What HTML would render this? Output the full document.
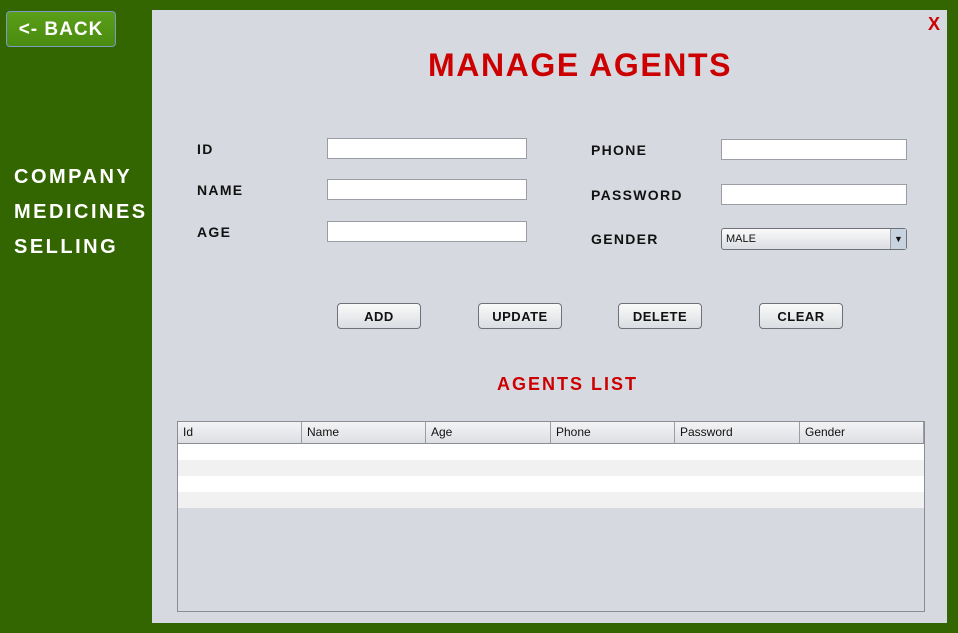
<!DOCTYPE html>
<html><head><style>
body{margin:0;width:958px;height:633px;background:#336600;position:relative;overflow:hidden;font-family:"Liberation Sans",Arial,sans-serif}
.a{position:absolute}
.back{left:6px;top:11px;width:108px;height:34px;border:1px solid #7a9cc4;border-radius:4px;background:linear-gradient(#5a9e18,#4a8c10);color:#fff;font-weight:bold;font-size:19px;text-align:center;line-height:36px;letter-spacing:1px}
.side{left:14px;color:#fff;font-weight:bold;font-size:20px;letter-spacing:2.5px}
.panel{left:152px;top:10px;width:795px;height:613px;background:#d6d9e0}
.lbl{font-weight:bold;font-size:14px;color:#111;letter-spacing:1.3px}
.in{background:#fff;border:1px solid #9a9da3;height:19px}
.btn{width:82px;height:24px;border:1px solid #6e7278;border-radius:4px;background:linear-gradient(#fafafa,#dadde2);font-weight:bold;font-size:13px;text-align:center;line-height:26px;color:#111;letter-spacing:.5px}
.th{top:422px;height:21px;font-size:12px;line-height:21px;padding-left:5px;box-sizing:border-box;border-right:1px solid #9a9da3;color:#111;background:linear-gradient(#f4f4f6,#dcdee3)}
</style></head><body>
<div class="a back">&lt;- BACK</div>
<div class="a side" style="top:166px">COMPANY</div>
<div class="a side" style="top:201px">MEDICINES</div>
<div class="a side" style="top:236px">SELLING</div>
<div class="a panel"></div>
<div class="a" style="left:928px;top:14px;color:#cc0000;font-weight:bold;font-size:18px">X</div>
<div class="a" style="left:428px;top:47px;color:#cc0000;font-weight:bold;font-size:32px;letter-spacing:1.6px">MANAGE AGENTS</div>
<div class="a lbl" style="left:197px;top:141px">ID</div>
<div class="a lbl" style="left:197px;top:182px">NAME</div>
<div class="a lbl" style="left:197px;top:224px">AGE</div>
<div class="a in" style="left:327px;top:138px;width:198px"></div>
<div class="a in" style="left:327px;top:179px;width:198px"></div>
<div class="a in" style="left:327px;top:221px;width:198px"></div>
<div class="a lbl" style="left:591px;top:142px">PHONE</div>
<div class="a lbl" style="left:591px;top:187px">PASSWORD</div>
<div class="a lbl" style="left:591px;top:231px">GENDER</div>
<div class="a in" style="left:721px;top:139px;width:184px"></div>
<div class="a in" style="left:721px;top:184px;width:184px"></div>
<div class="a" style="left:721px;top:228px;width:180px;height:20px;border:1px solid #6e7278;border-radius:3px;background:linear-gradient(#fafafa,#dadde2);font-size:11px;line-height:21px;padding-left:4px;color:#111">MALE<div class="a" style="right:0;top:0;width:15px;height:20px;border-left:1px solid #9a9da3;background:#c8d3e0;font-size:9px;line-height:20px;text-align:center">▼</div></div>
<div class="a btn" style="left:337px;top:303px">ADD</div>
<div class="a btn" style="left:478px;top:303px">UPDATE</div>
<div class="a btn" style="left:618px;top:303px">DELETE</div>
<div class="a btn" style="left:759px;top:303px">CLEAR</div>
<div class="a" style="left:497px;top:374px;color:#cc0000;font-weight:bold;font-size:18px;letter-spacing:2px">AGENTS LIST</div>
<div class="a" style="left:177px;top:421px;width:746px;height:189px;border:1px solid #8a8d93;background:#d6d9e0"></div>
<div class="a" style="left:178px;top:443px;width:746px;height:1px;background:#8a8d93"></div>
<div class="a" style="left:178px;top:444px;width:746px;height:16px;background:#fff"></div>
<div class="a" style="left:178px;top:460px;width:746px;height:16px;background:#f1f1f1"></div>
<div class="a" style="left:178px;top:476px;width:746px;height:16px;background:#fff"></div>
<div class="a" style="left:178px;top:492px;width:746px;height:16px;background:#f1f1f1"></div>
<div class="a th" style="left:178px;width:124px">Id</div>
<div class="a th" style="left:302px;width:124px">Name</div>
<div class="a th" style="left:426px;width:125px">Age</div>
<div class="a th" style="left:551px;width:124px">Phone</div>
<div class="a th" style="left:675px;width:125px">Password</div>
<div class="a th" style="left:800px;width:124px">Gender</div>
</body></html>
